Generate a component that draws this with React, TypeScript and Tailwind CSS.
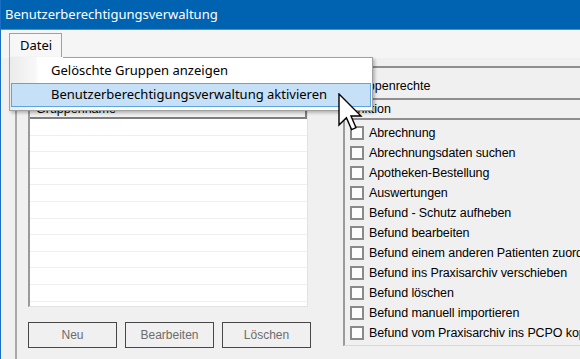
import React from 'react'

const RECHTE = [
  'Abrechnung',
  'Abrechnungsdaten suchen',
  'Apotheken-Bestellung',
  'Auswertungen',
  'Befund - Schutz aufheben',
  'Befund bearbeiten',
  'Befund einem anderen Patienten zuordnen',
  'Befund ins Praxisarchiv verschieben',
  'Befund löschen',
  'Befund manuell importieren',
  'Befund vom Praxisarchiv ins PCPO kopieren',
  'Behandlungsfall anlegen',
]

const ui = "font-['Noto_Sans','Open_Sans',sans-serif]"
const classic = "font-['Liberation_Sans','Arial',sans-serif]"

function Cursor() {
  return (
    <svg
      className="absolute left-[337px] top-[93px]"
      width="26"
      height="38"
      viewBox="0 0 13 19"
    >
      <path
        d="M0.5 0.5 L0.5 16 L4.2 12.4 L6.8 18.3 L9 17.3 L6.5 11.5 L11.5 11.5 Z"
        fill="#ffffff"
        stroke="#000000"
        strokeWidth="0.7"
        strokeLinejoin="miter"
      />
    </svg>
  )
}

export default function App() {
  return (
    <div className={`relative w-[580px] h-[359px] overflow-hidden bg-[#f0f0f0] border-l border-[#1a6fc4] ${classic}`}>
      {/* Titelleiste */}
      <div className={`h-[29px] bg-[#0063b1] flex items-center pl-[4px] text-white text-[13px] ${ui}`}>
        Benutzerberechtigungsverwaltung
      </div>
      <div className="h-px bg-[#4a92d4]" />

      {/* Menüleiste */}
      <div className="h-[28px] bg-[#f5f5f5] pl-[8px] pt-[3px]">
        <div className={`w-[53px] h-[25px] border border-b-0 border-[#a0a0a0] bg-[#f7f7f7] pl-[10px] pt-[2px] text-[13px] text-black ${ui}`}>
          Datei
        </div>
      </div>

      {/* Inhalt */}
      <div className="flex pl-[14px] pt-[8px]">
        {/* Gruppen */}
        <div className="w-[328px] shrink-0 h-[293px] border-l-2 border-t-2 border-[#a8a8a8] pl-[11px] pt-[32px]">
          <div className="w-[280px] h-[207px] bg-white border-l-2 border-t-2 border-[#9a9a9a] border-r border-b border-r-[#e3e3e3] border-b-[#e3e3e3] overflow-hidden">
            <div className="h-[17px] bg-[#f0f0f0] border-b-2 border-r-2 border-[#7e7e7e] pl-[6px] text-[12.5px] leading-[15px] text-black">
              Gruppenname
            </div>
            {Array.from({ length: 12 }).map((_, i) => (
              <div key={i} className="h-[16.6px] border-b border-[#efefef]" />
            ))}
          </div>
          <div className="flex gap-[8px] mt-[15px]">
            {['Neu', 'Bearbeiten', 'Löschen'].map((b) => (
              <div
                key={b}
                className="w-[89px] h-[26px] border border-[#474747] flex items-center justify-center text-[12px] text-[#6d6d6d]"
              >
                {b}
              </div>
            ))}
          </div>
        </div>

        {/* Gruppenrechte */}
        <div className="flex-1 min-w-0 border-t-2 border-[#8e8e8e]">
          <div className="h-[30px] pl-[4px] pt-[10px] text-[12.5px] leading-[16px] text-black">
            Gruppenrechte
          </div>
          <div className="h-[22px] border-t-2 border-b-2 border-[#8e8e8e] pl-0 text-[12.5px] leading-[18px] text-black">
            Funktion
          </div>
          <div className="h-[226px] overflow-hidden border-l-2 border-[#9a9a9a] border-b border-b-[#d9d9d9] pl-[5px] pt-[3px]">
            {RECHTE.map((r) => (
              <div key={r} className="h-[20px] flex items-center gap-[5px] whitespace-nowrap">
                <div className="w-[14px] h-[14px] shrink-0 border-2 border-[#8a8a8a] bg-[#fdfdfd]" />
                <span className="text-[12.5px] tracking-[-0.1px] text-black">{r}</span>
              </div>
            ))}
          </div>
        </div>
      </div>

      {/* Aufgeklapptes Menü */}
      <div
        className={`absolute left-[8px] top-[57px] w-[364px] h-[54px] border border-[#a0a0a0] border-t-0 bg-[linear-gradient(90deg,#ebebeb_0px,#f8f8f8_26px,#ffffff_28px)] shadow-[2px_2px_3px_rgba(0,0,0,0.25)] ${ui} text-[13px] text-black`}
      >
        <div className="flex">
          <div className="w-[53px]" />
          <div className="flex-1 h-px bg-[#a0a0a0]" />
        </div>
        <div className="h-[25px] flex items-center pl-[41px]">Gelöschte Gruppen anzeigen</div>
        <div className="mx-px h-[24px] flex items-center pl-[39px] bg-[#c5e0f7] border border-[#5ea3e3]">
          Benutzerberechtigungsverwaltung aktivieren
        </div>
      </div>

      <Cursor />
    </div>
  )
}
